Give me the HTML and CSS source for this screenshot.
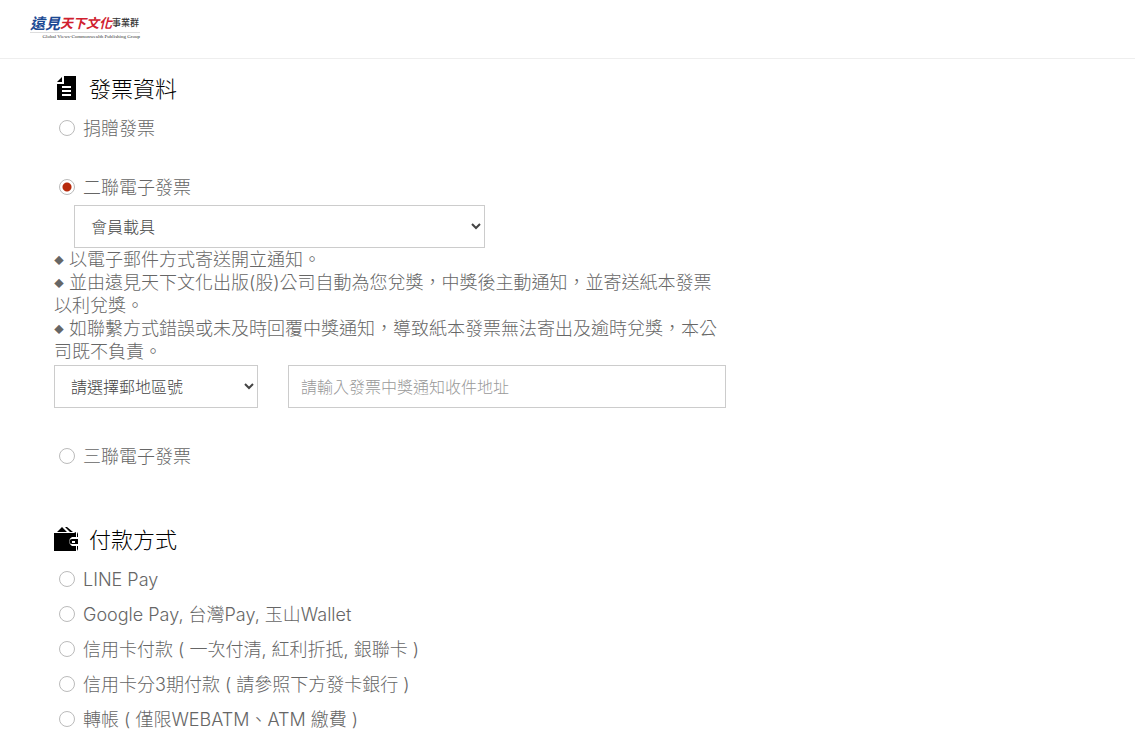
FILE: index.html
```html
<!DOCTYPE html>
<html lang="zh-Hant">
<head>
  <meta charset="UTF-8">
  <meta name="viewport" content="width=device-width, initial-scale=1">
  <title>結帳</title>
  <link rel="stylesheet" href="styles.css">
</head>
<body>
  <header class="header">
    <div class="logo">
      <div class="logo-name"><span class="logo-blue">遠見</span><span class="logo-red">天下文化</span><span class="logo-group">事業群</span></div>
      <div class="logo-en">Global Views-Commonwealth Publishing Group</div>
    </div>
  </header>
  <main class="checkout">
    <section class="block">
      <h2 class="title">
        <svg class="icon" viewBox="0 0 26 26">
          <path d="M10 0h12v24H3V8h7z"/>
          <path d="M8 1v5H3z"/>
          <path d="M8 11h9M8 15h9M8 19h9" stroke="#fff" stroke-width="2"/>
        </svg>
        發票資料
      </h2>
      <div class="option">
        <input type="radio" name="invoice" id="donate">
        <label for="donate">捐贈發票</label>
      </div>
      <div class="option option-two">
        <input type="radio" name="invoice" id="two" checked>
        <label for="two">二聯電子發票</label>
      </div>
      <div class="carrier">
        <select class="field" aria-label="載具">
          <option>會員載具</option>
        </select>
      </div>
      <div class="notes">
        <p><span class="dot">◆</span> 以電子郵件方式寄送開立通知。</p>
        <p><span class="dot">◆</span> 並由遠見天下文化出版(股)公司自動為您兌獎，中獎後主動通知，並寄送紙本發票以利兌獎。</p>
        <p><span class="dot">◆</span> 如聯繫方式錯誤或未及時回覆中獎通知，導致紙本發票無法寄出及逾時兌獎，本公司既不負責。</p>
      </div>
      <div class="row">
        <div class="col-zip">
          <select class="field" aria-label="郵地區號">
            <option>請選擇郵地區號</option>
          </select>
        </div>
        <div class="col-addr">
          <input class="field" type="text" placeholder="請輸入發票中獎通知收件地址" aria-label="收件地址">
        </div>
      </div>
      <div class="option option-three">
        <input type="radio" name="invoice" id="three">
        <label for="three">三聯電子發票</label>
      </div>
    </section>

    <section class="block">
      <h2 class="title">
        <svg class="icon" viewBox="0 0 26 26">
          <path d="M3 5l5-5 5 5zM11 0h2l6 5h-3z"/>
          <path d="M0 6h20l2-1v5h-4a5 5 0 0 0 0 9h4v5H0z"/>
          <path d="M23 5l1 2v3h-1zM23 19h1v3l-1 2z"/>
          <path d="M18 12h6v5h-6a2.500 2.500 0 0 1 0-5z"/>
          <path d="M18 15h3" stroke="#fff" stroke-width="2"/>
        </svg>
        付款方式
      </h2>
      <div class="option">
        <input type="radio" name="pay" id="line">
        <label for="line">LINE Pay</label>
      </div>
      <div class="option">
        <input type="radio" name="pay" id="google">
        <label for="google">Google Pay, 台灣Pay, 玉山Wallet</label>
      </div>
      <div class="option">
        <input type="radio" name="pay" id="card">
        <label for="card">信用卡付款 ( 一次付清, 紅利折抵, 銀聯卡 )</label>
      </div>
      <div class="option">
        <input type="radio" name="pay" id="card3">
        <label for="card3">信用卡分3期付款 ( 請參照下方發卡銀行 )</label>
      </div>
      <div class="option">
        <input type="radio" name="pay" id="atm">
        <label for="atm">轉帳 ( 僅限WEBATM、ATM 繳費 )</label>
      </div>
    </section>
  </main>
</body>
</html>
```
FILE: styles.css
```css
* {
  box-sizing: border-box;
}
body {
  margin: 0;
  background: #fff;
  color: #666;
  font-family: Inter, "Noto Sans CJK TC", sans-serif;
  font-size: 18px;
  font-weight: 300;
  line-height: 23px;
}
.header {
  height: 59px;
  padding: 13px 30px;
  border-bottom: 1px solid #eee;
}
.logo {
  width: 110px;
  white-space: nowrap;
}
.logo-name {
  display: flex;
  align-items: center;
  height: 20px;
  border-bottom: 1px solid #ddd;
  font-family: "Noto Sans CJK TC", sans-serif;
  font-weight: 700;
}
.logo-blue {
  color: #1c4a94;
  font-size: 15px;
  font-style: italic;
}
.logo-red {
  color: #d0202e;
  font-size: 13px;
  font-style: italic;
}
.logo-group {
  color: #333;
  font-size: 9px;
  font-weight: 500;
}
.logo-en {
  color: #333;
  font-family: "Liberation Serif", serif;
  font-size: 5px;
  font-weight: 400;
  line-height: 7px;
  text-align: right;
}
.checkout {
  max-width: 780px;
  padding: 12px 54px 0;
}
.block + .block {
  margin-top: 48px;
}
.title {
  display: flex;
  align-items: center;
  gap: 9px;
  margin: 0 0 4px;
  color: #000;
  font-size: 22px;
  font-weight: 300;
  line-height: 36px;
}
.icon {
  width: 26px;
  height: 26px;
}
.option {
  display: flex;
  align-items: center;
  gap: 8px;
  height: 35px;
  padding-left: 5px;
}
.option-two {
  margin-top: 24px;
}
.option-three {
  margin-top: 31px;
}
input[type="radio"] {
  appearance: none;
  width: 16px;
  height: 16px;
  margin: 0 0 2px;
  border: 1px solid #bbb;
  border-radius: 50%;
  background: #fff;
}
input[type="radio"]:checked {
  background: radial-gradient(circle, #b72a0c 4px, #fff 5px);
}
.field {
  display: block;
  width: 100%;
  height: 43px;
  padding: 6px 12px;
  border: 1px solid #ccc;
  border-radius: 0;
  background: #fff;
  color: #444;
  font-family: inherit;
  font-size: 16px;
  font-weight: 300;
}
.field::placeholder {
  color: #999;
}
.carrier {
  max-width: 431px;
  padding-left: 20px;
}
.notes {
  padding-bottom: 2px;
}
.notes p {
  margin: 0;
}
.dot {
  font-family: "DejaVu Sans", sans-serif;
  font-size: 10px;
  line-height: 1;
  vertical-align: 2px;
}
.row {
  display: flex;
  margin: 0 -15px;
}
.col-zip {
  width: 33.3333%;
  padding: 0 15px;
}
.col-addr {
  width: 66.6667%;
  padding: 0 15px;
}
```
